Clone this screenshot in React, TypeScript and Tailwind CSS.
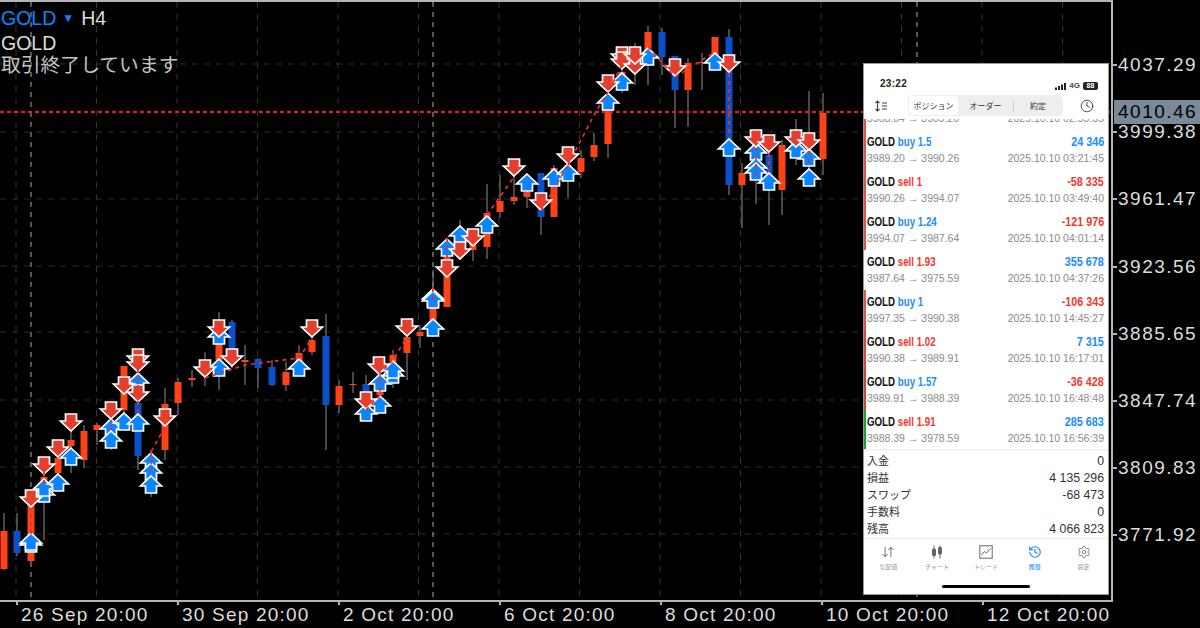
import { ArrowDownUp, Clock, History, Settings } from 'lucide-react'

const UP = '#0a50c8'
const DOWN = '#ff4218'

// x, wick top, wick bottom, body top, body bottom, colour
const candles: [number, number, number, number, number, string][] = [
  [4, 513, 570, 531, 569, DOWN],
  [17, 513, 556, 531, 553, UP],
  [31, 500, 562, 505, 561, DOWN],
  [44, 470, 540, 477, 500, DOWN],
  [58, 455, 485, 458, 473, DOWN],
  [71, 430, 473, 440, 446, DOWN],
  [84, 425, 468, 431, 460, DOWN],
  [97, 423, 445, 425, 430, DOWN],
  [111, 410, 450, 420, 430, UP],
  [124, 366, 420, 366, 410, DOWN],
  [138, 350, 470, 403, 456, UP],
  [151, 450, 497, 460, 470, UP],
  [165, 388, 460, 404, 450, DOWN],
  [178, 378, 415, 382, 403, DOWN],
  [192, 370, 387, 378, 380, DOWN],
  [205, 352, 386, 370, 375, DOWN],
  [219, 312, 390, 320, 360, DOWN],
  [232, 320, 368, 322, 355, UP],
  [245, 345, 385, 360, 362, DOWN],
  [258, 358, 388, 359, 368, UP],
  [272, 360, 386, 367, 385, UP],
  [286, 362, 391, 372, 385, DOWN],
  [299, 345, 370, 353, 361, DOWN],
  [312, 322, 355, 340, 352, DOWN],
  [326, 314, 450, 336, 405, UP],
  [339, 380, 413, 386, 405, DOWN],
  [353, 372, 393, 384, 385, DOWN],
  [366, 375, 405, 384, 395, UP],
  [380, 370, 410, 385, 395, DOWN],
  [393, 350, 388, 355, 368, DOWN],
  [407, 330, 380, 337, 353, DOWN],
  [420, 325, 348, 332, 336, DOWN],
  [433, 270, 335, 308, 325, DOWN],
  [447, 255, 307, 255, 307, DOWN],
  [460, 220, 260, 235, 245, DOWN],
  [473, 230, 261, 240, 250, DOWN],
  [487, 184, 259, 213, 247, DOWN],
  [500, 175, 218, 201, 212, DOWN],
  [514, 165, 205, 197, 201, DOWN],
  [527, 175, 208, 192, 197, DOWN],
  [541, 173, 235, 173, 217, UP],
  [554, 165, 217, 168, 217, DOWN],
  [568, 155, 198, 165, 180, DOWN],
  [581, 150, 178, 158, 172, DOWN],
  [594, 133, 161, 145, 157, DOWN],
  [608, 92, 158, 108, 144, DOWN],
  [622, 70, 93, 72, 82, DOWN],
  [635, 43, 85, 55, 65, DOWN],
  [648, 26, 85, 32, 60, DOWN],
  [662, 28, 75, 32, 57, UP],
  [675, 56, 128, 56, 90, UP],
  [688, 58, 127, 63, 90, DOWN],
  [702, 53, 90, 62, 63, DOWN],
  [715, 37, 70, 37, 55, DOWN],
  [729, 29, 195, 37, 185, UP],
  [742, 163, 228, 173, 185, DOWN],
  [756, 140, 204, 145, 165, UP],
  [769, 150, 225, 155, 175, UP],
  [782, 140, 215, 145, 190, DOWN],
  [796, 119, 165, 145, 155, UP],
  [809, 91, 170, 150, 160, UP],
  [823, 93, 175, 113, 159, DOWN],
]

const upArrows: [number, number][] = [
  [31, 534], [31, 532], [44, 484], [44, 478], [58, 473], [71, 447], [111, 418], [111, 430], [124, 412], [138, 372], [138, 413],
  [151, 452], [151, 462], [151, 475], [219, 326], [219, 358], [299, 358], [366, 403], [380, 395], [380, 373], [393, 365], [393, 360],
  [433, 318], [433, 288], [433, 290], [447, 238], [460, 225], [487, 215], [527, 173], [554, 168], [568, 163],
  [608, 92], [622, 72], [648, 47], [715, 52], [729, 138], [756, 142], [756, 157], [756, 162], [769, 172], [796, 140], [809, 148], [809, 168],
]

const downArrows: [number, number][] = [
  [31, 508], [44, 475], [58, 458], [71, 432], [111, 420], [124, 395], [138, 367], [138, 373], [138, 403], [165, 427], [205, 378],
  [219, 338], [232, 367], [312, 338], [366, 410], [379, 375], [407, 337], [447, 278], [460, 260], [473, 247], [514, 177], [541, 211], [568, 165],
  [608, 93], [622, 65], [622, 70], [635, 75], [635, 65], [675, 77], [729, 73], [756, 148], [769, 153], [796, 148], [809, 151],
]

const tradeLines = [
  '31,534 31,508', '44,484 44,470', '111,430 111,420', '138,413 138,367', '165,427 151,452', '151,452 151,475',
  '205,378 245,365 299,358 312,338', '366,410 380,395 380,373 393,360 407,337', '433,288 433,305', '447,238 447,262',
  '487,215 514,177', '541,211 568,165', '568,165 594,115 608,92', '648,47 675,77', '675,77 715,52', '729,73 729,138',
  '756,148 756,178', '769,153 769,172', '809,151 809,168', '622,65 608,92',
]

const priceLabels = ['4037.29', '3999.38', '3961.47', '3923.56', '3885.65', '3847.74', '3809.83', '3771.92']
const timeLabels = ['26 Sep 20:00', '30 Sep 20:00', '2 Oct 20:00', '6 Oct 20:00', '8 Oct 20:00', '10 Oct 20:00', '12 Oct 20:00']
const gridY = [64, 132, 199, 266, 332, 400, 467, 534]
const gridX = [16, 96.5, 177, 257.5, 338, 418.5, 499, 579.5, 660, 740.5, 821, 901.5, 982, 1062.5]

const trades = [
  { side: 'buy', lots: '', profit: '', from: '3988.84', to: '3989.20', time: '2025.10.10 02:55:35', bar: 'bg-[#e8524a]', cut: true },
  { side: 'buy', lots: '1.5', profit: '24 346', from: '3989.20', to: '3990.26', time: '2025.10.10 03:21:45', bar: 'bg-[#e8524a]' },
  { side: 'sell', lots: '1', profit: '-58 335', from: '3990.26', to: '3994.07', time: '2025.10.10 03:49:40', bar: 'bg-[#e8524a]' },
  { side: 'buy', lots: '1.24', profit: '-121 976', from: '3994.07', to: '3987.64', time: '2025.10.10 04:01:14', bar: 'bg-[#e8524a]' },
  { side: 'sell', lots: '1.93', profit: '355 678', from: '3987.64', to: '3975.59', time: '2025.10.10 04:37:26', bar: 'bg-white' },
  { side: 'buy', lots: '1', profit: '-106 343', from: '3997.35', to: '3990.38', time: '2025.10.10 14:45:27', bar: 'bg-[#e8524a]' },
  { side: 'sell', lots: '1.02', profit: '7 315', from: '3990.38', to: '3989.91', time: '2025.10.10 16:17:01', bar: 'bg-[#d9483f]' },
  { side: 'buy', lots: '1.57', profit: '-36 428', from: '3989.91', to: '3988.39', time: '2025.10.10 16:48:48', bar: 'bg-[#c9453d]' },
  { side: 'sell', lots: '1.91', profit: '285 683', from: '3988.39', to: '3978.59', time: '2025.10.10 16:56:39', bar: 'bg-[#12a82a]' },
]

const summary = [
  ['入金', '0'],
  ['損益', '4 135 296'],
  ['スワップ', '-68 473'],
  ['手数料', '0'],
  ['残高', '4 066 823'],
]

function Chart() {
  return (
    <svg width="1111" height="598" viewBox="0 2 1111 598" className="block">
      {gridY.map((y) => (
        <line key={y} x1="0" x2="1111" y1={y} y2={y} stroke="#2c2c2c" strokeWidth="1" strokeDasharray="6 6" />
      ))}
      {gridX.map((x) => (
        <line key={x} x1={x} x2={x} y1="2" y2="600" stroke="#333" strokeWidth="1" strokeDasharray="6 6" />
      ))}
      {[31, 433, 917].map((x) => (
        <line key={x} x1={x} x2={x} y1="2" y2="600" stroke="#aaa" strokeWidth="1" strokeDasharray="5 5" />
      ))}
      {candles.map(([x, wt, wb, bt, bb, color]) => (
        <g key={x}>
          <line x1={x} x2={x} y1={wt} y2={wb} stroke="#777" strokeWidth="1.2" />
          <rect x={x - 3.5} y={bt} width="7" height={bb - bt} fill={color} />
        </g>
      ))}
      {upArrows.map(([x, y], i) => (
        <polygon
          key={i}
          transform={`translate(${x} ${y + 1})`}
          points="0,0 10.5,10 5.5,10 5.5,17 -5.5,17 -5.5,10 -10.5,10"
          fill="#0a84ff"
          stroke="#fff"
          strokeWidth="1.7"
        />
      ))}
      {downArrows.map(([x, y], i) => (
        <polygon
          key={i}
          transform={`translate(${x} ${y - 1})`}
          points="0,0 10.5,-10 5.5,-10 5.5,-17 -5.5,-17 -5.5,-10 -10.5,-10"
          fill="#e33f2e"
          stroke="#fff"
          strokeWidth="1.7"
        />
      ))}
      {tradeLines.map((pts) => (
        <polyline key={pts} points={pts} fill="none" stroke="#e8302a" strokeWidth="1.7" strokeDasharray="4 4" />
      ))}
      <line x1="0" x2="1111" y1="112" y2="112" stroke="#e8201c" strokeWidth="2" strokeDasharray="4 3" />
    </svg>
  )
}

function SortIcon() {
  return (
    <svg width="14" height="12" viewBox="0 0 14 12" fill="none" stroke="#444" strokeWidth="1.1">
      <path d="M3.5 1v10M1.5 3l2-2 2 2M1.5 9l2 2 2-2" />
      <path d="M8 3h5M8 6h5M8 9h5" />
    </svg>
  )
}

function CandleIcon() {
  return (
    <svg width="14" height="14" viewBox="0 0 14 14" fill="#666" stroke="#666" strokeWidth="1">
      <path d="M4 0.5v13M10 0.5v13" fill="none" />
      <rect x="2.5" y="4" width="3" height="6.5" rx="0.5" />
      <rect x="8.5" y="2.5" width="3" height="6.5" rx="0.5" />
    </svg>
  )
}

function TradeIcon() {
  return (
    <svg width="14" height="14" viewBox="0 0 14 14" fill="none" stroke="#666" strokeWidth="1">
      <rect x="0.8" y="0.8" width="12.4" height="12.4" />
      <path d="M2.5 10l3-3.5 2 1.5 4-4.5" />
    </svg>
  )
}

function PhonePanel() {
  return (
    <div className="absolute left-[863px] top-[63px] w-[246px] h-[532px] bg-white border border-[#999] flex flex-col overflow-hidden font-['Liberation_Sans',sans-serif]">
      {/* Status bar */}
      <div className="h-[28px] shrink-0 flex items-end justify-between pl-[16px] pr-[10px] pb-[1px]">
        <span className="text-[10px] leading-[14px] font-bold text-[#222] tracking-[0.3px]">23:22</span>
        <div className="flex items-center gap-[3px]">
          <svg width="11" height="7" viewBox="0 0 11 7" fill="#222">
            <rect x="0" y="4.5" width="2" height="2.5" />
            <rect x="3" y="3" width="2" height="4" />
            <rect x="6" y="1.5" width="2" height="5.5" />
            <rect x="9" y="0" width="2" height="7" />
          </svg>
          <span className="text-[8px] leading-[10px] font-bold text-[#444]">4G</span>
          <span className="w-[15px] h-[8px] bg-[#222] rounded-[2px] text-white text-[7px] leading-[8px] font-bold text-center">88</span>
        </div>
      </div>

      {/* Tabs */}
      <div className="h-[27px] shrink-0 flex items-center pl-[10px] pr-[11px]">
        <SortIcon />
        <div className="ml-[20px] w-[155px] h-[21px] bg-[#eeeeee] rounded-[5px] flex items-center p-[1px] text-[8px] font-['Noto_Sans_CJK_JP',sans-serif] text-[#333]">
          <span className="w-[49px] h-[19px] bg-white rounded-[4px] flex items-center justify-center">ポジション</span>
          <span className="w-[55px] text-center">オーダー</span>
          <span className="w-px h-[12px] bg-[#ccc]" />
          <span className="flex-1 text-center">約定</span>
        </div>
        <Clock size={14} color="#444" strokeWidth={1.6} className="ml-auto mr-[3px]" />
      </div>

      {/* History rows */}
      <div className="flex-1 overflow-hidden">
        {trades.map((t, i) => (
          <div key={i} className={`h-[40px] flex ${t.cut ? '-mt-[29px]' : ''}`}>
            <div className={`w-[2px] shrink-0 ${t.bar}`} />
            <div className="flex-1 pl-[1px] pr-[4px] pt-[3px]">
              <div className="flex justify-between h-[18px] items-center text-[13.5px] font-bold">
                <span className="inline-block whitespace-nowrap origin-left scale-x-[0.72] text-[#111]">
                  GOLD <span className={t.side === 'buy' ? 'text-[#1a8cff]' : 'text-[#f0392b]'}>{t.side} {t.lots}</span>
                </span>
                <span className={`inline-block whitespace-nowrap origin-right scale-x-[0.8] ${t.profit.startsWith('-') ? 'text-[#f0392b]' : 'text-[#1a8cff]'}`}>{t.profit}</span>
              </div>
              <div className="flex justify-between h-[15px] items-center text-[10.5px] text-[#8a8a8a]">
                <span>{t.from} → {t.to}</span>
                <span>{t.time}</span>
              </div>
            </div>
          </div>
        ))}
      </div>

      {/* Summary */}
      <div className="h-[89px] shrink-0 border-t-2 border-[#f2f2f2] pt-[2px] pb-[3px] pl-[3px] pr-[4px] flex flex-col justify-between text-[12.3px] text-[#333] font-['Liberation_Sans','Noto_Sans_CJK_JP',sans-serif]">
        {summary.map(([label, value]) => (
          <div key={label} className="flex justify-between h-[17px] items-center">
            <span className="text-[11px]">{label}</span>
            <span>{value}</span>
          </div>
        ))}
      </div>

      {/* Bottom tabs */}
      <div className="h-[56px] shrink-0 border-t border-[#eeeeee] relative font-['Noto_Sans_CJK_JP',sans-serif]">
        <div className="grid grid-cols-5 pt-[6px] text-[6px] leading-[10px] text-[#999]">
          <div className="flex flex-col items-center gap-[3px]">
            <ArrowDownUp size={14} color="#666" strokeWidth={1.6} />
            <span>気配値</span>
          </div>
          <div className="flex flex-col items-center gap-[3px]">
            <CandleIcon />
            <span>チャート</span>
          </div>
          <div className="flex flex-col items-center gap-[3px]">
            <TradeIcon />
            <span>トレード</span>
          </div>
          <div className="flex flex-col items-center gap-[3px] text-[#1a8cff]">
            <History size={14} color="#1a8cff" strokeWidth={2} />
            <span>履歴</span>
          </div>
          <div className="flex flex-col items-center gap-[3px]">
            <Settings size={14} color="#666" strokeWidth={1.4} />
            <span>設定</span>
          </div>
        </div>
        <div className="absolute left-[78px] bottom-[6px] w-[88px] h-[3px] bg-black rounded-full" />
      </div>
    </div>
  )
}

export default function App() {
  return (
    <div className="relative w-[1200px] h-[628px] bg-black overflow-hidden font-['Liberation_Sans',sans-serif] text-[#dddddd]">
      <div className="flex h-[602px]">
        <div className="relative w-[1113px] h-[602px] shrink-0 border-t-2 border-b-2 border-r-2 border-[#b5b5b5]">
          <Chart />
          <div className="absolute left-[1px] top-[5px] text-[19.5px] leading-[22px] text-[#dddddd] font-['Liberation_Sans','Noto_Sans_CJK_JP',sans-serif]">
            <div className="flex items-center">
              <span className="text-[#0a84ff]">GOLD</span>
              <span className="text-[#0a84ff] text-[12px] ml-[6px] mr-[7px]">▼</span>
              <span>H4</span>
            </div>
            <div className="mt-[3px]">GOLD</div>
            <div className="text-[19.8px] text-[#c4c4c4]">取引終了しています</div>
          </div>
        </div>
        <div className="flex-1 pt-[54px] text-[19px] leading-[22px] tracking-[1.5px]">
          {priceLabels.map((p) => (
            <div key={p} className="h-[67.2px] flex items-start">
              <div className="flex items-center h-[22px]">
                <span className="w-[4px] h-[2px] bg-[#b5b5b5]" />
                <span className="ml-[1px]">{p}</span>
              </div>
            </div>
          ))}
        </div>
      </div>

      <div className="flex pl-[16px] text-[19px] leading-[22px] tracking-[1.2px]">
        {timeLabels.map((t) => (
          <div key={t} className="w-[161px] shrink-0 flex items-start">
            <span className="w-[2px] h-[3px] bg-[#b5b5b5]" />
            <span className="ml-[3px] mt-[2px] whitespace-nowrap">{t}</span>
          </div>
        ))}
      </div>

      {/* Current price tag */}
      <div className="absolute left-[1114px] top-[100px] w-[86px] h-[24px] bg-[#7a8a9a] text-black text-[19px] leading-[24px] tracking-[1.5px] pl-[4px]">
        4010.46
      </div>

      <PhonePanel />
    </div>
  )
}
